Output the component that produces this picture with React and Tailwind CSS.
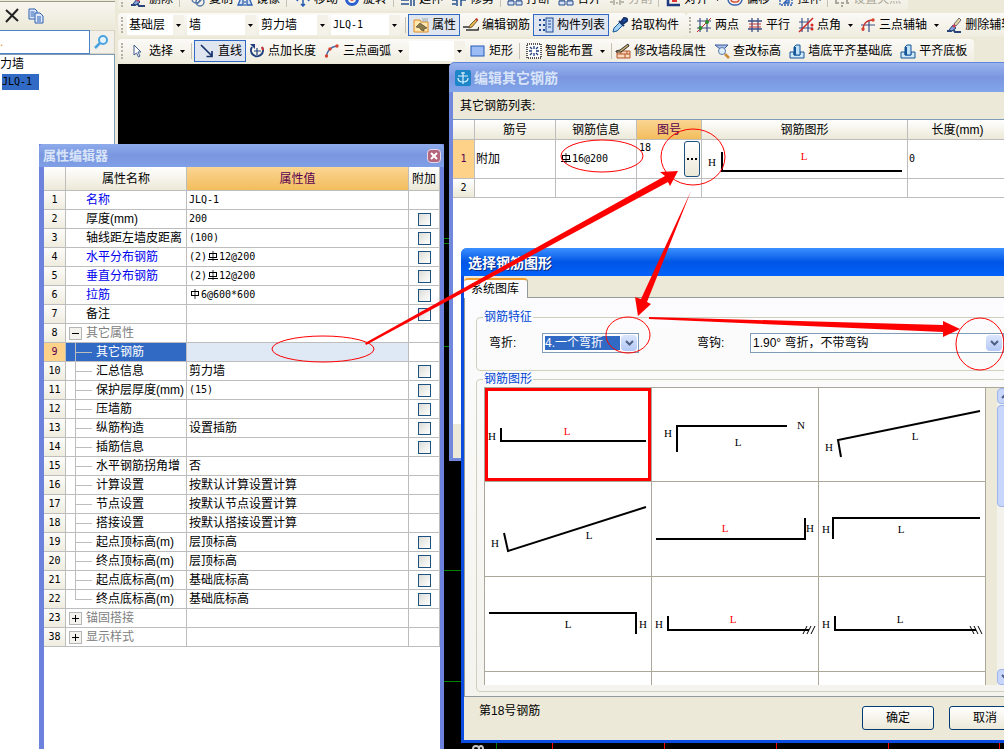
import { useState } from 'react'
import clsx from 'clsx'

const SANS = "font-['Liberation_Sans','Noto_Sans_CJK_SC',sans-serif]"
const MONO = "font-['DejaVu_Sans_Mono','Noto_Sans_CJK_SC',monospace] text-[10px]"

/* ---------- small icons, all on a 16x16 grid ---------- */

const icons = {
    brush: (
        <>
            <path d="M1 14h4l2-2 2 3h6" fill="none" stroke="#26437a" strokeWidth="2" />
            <path d="M3 13l4-5 3 3-4 3z" fill="#7fa0d8" stroke="#26437a" />
            <path d="M8 7l5-6 2 2-5 6z" fill="#ead9a8" stroke="#4a4a60" strokeWidth=".8" />
            <path d="M6 9l2-2 2 2-2 2z" fill="#c2405a" />
        </>
    ),
    copy: (
        <g fill="none" stroke="#5578a8" strokeWidth="1.4">
            <circle cx="6" cy="8" r="4" />
            <circle cx="10" cy="11" r="4" />
            <path d="M7 13l5-5" />
        </g>
    ),
    mirror: (
        <g fill="#cfe0f7" stroke="#2a5db0" strokeWidth="1.3">
            <path d="M6 2v12H1zM10 2v12h5z" />
            <path d="M8 1v14" strokeDasharray="2 1" />
        </g>
    ),
    move: <path d="M8 1v14M1 8h14M6 3l2-2 2 2M6 13l2 2 2-2M3 6L1 8l2 2M13 6l2 2-2 2" fill="none" stroke="#2a5db0" strokeWidth="1.5" />,
    rotate: (
        <>
            <circle cx="8" cy="8" r="5.5" fill="none" stroke="#2a5fd0" strokeWidth="3" />
            <circle cx="8" cy="8" r="2" fill="#e05040" />
        </>
    ),
    extend: <path d="M1 9h8M1 13h8M11 2v13M14 2v13M6 6l3 3" fill="none" stroke="#24508f" strokeWidth="1.5" />,
    trim: <path d="M1 9h5M10 9h5M6 2v13M10 2v13M1 13h4" fill="none" stroke="#24508f" strokeWidth="1.5" />,
    split: <path d="M1 5h6v4H1zM9 5h6v4H9zM1 10h6v4H1zM9 10h6v4H9z" fill="#d6e3f8" stroke="#2b4f8c" />,
    cut: <path d="M2 2h12v5H2zM5 7v7M11 7v7M1 11h3M12 11h3M7 12h2" fill="none" stroke="#a8a69a" strokeWidth="1.5" />,
    align: (
        <>
            <path d="M3 2v12h12" fill="none" stroke="#203a80" strokeWidth="2.5" />
            <path d="M7 6h7M7 10h5" stroke="#d33" strokeWidth="2" />
        </>
    ),
    offset: (
        <g fill="none" strokeWidth="1.5">
            <rect x="1" y="1" width="14" height="13" rx="6" stroke="#3b66b5" />
            <rect x="4" y="4" width="8" height="7" rx="3" stroke="#d8513b" />
        </g>
    ),
    stretch: (
        <g fill="none" stroke="#2a5db0" strokeWidth="1.3">
            <rect x="2" y="2" width="12" height="12" strokeDasharray="2 1" />
            <path d="M6 12l5-5v5z" fill="#8fb0e8" />
        </g>
    ),
    grip: <path d="M1 12h4M7 12h3M12 12h3M8 14v2M2 9v2M13 9v2" stroke="#aaa89c" strokeWidth="2" />,
    props: (
        <>
            <path d="M1 3h6l1 2h7v10H1z" fill="#ffe7b0" stroke="#e08a1e" />
            <path d="M3 10l4-4 7 5-3 1v2l-3-1-1-2z" fill="#8a7a4a" stroke="#4a4028" strokeWidth=".6" />
            <path d="M9 4h6M9 2h6" stroke="#9aa" />
        </>
    ),
    editBar: (
        <>
            <path d="M0 10h6M3 13h12l1-3" fill="none" stroke="#333" strokeWidth="1.5" />
            <path d="M6 11l1-3 6-6 2 1-6 7z" fill="#e6b84c" stroke="#5a4220" strokeWidth=".8" />
            <path d="M12 2l2-1 1 2-1 1z" fill="#c33" />
        </>
    ),
    list: (
        <>
            <path d="M1 3h2M1 8h2M1 13h2M5 3h2M5 8h2M5 13h2" stroke="#1e4b93" strokeWidth="2" />
            <rect x="8" y="1" width="7" height="14" fill="#c7dbf8" stroke="#1e4b93" />
            <path d="M10 4h3M10 7h3M10 10h3" stroke="#1e4b93" />
        </>
    ),
    picker: (
        <>
            <path d="M1 15l1-4 6-6 3 3-6 6z" fill="#9fd0f5" stroke="#1b5796" />
            <path d="M7 4l5 5M9 5l3-4q4 0 3 3l-4 3z" fill="#1d4ea8" stroke="#16336e" strokeWidth="2" />
        </>
    ),
    twoPoint: (
        <>
            <path d="M4 1v14M11 1v14M1 4h14M1 11h14" stroke="#3c4f86" strokeWidth="1.2" />
            <path d="M1 15L15 1" stroke="#c22" />
            <circle cx="4.500" cy="11" r="2" fill="#2d8a2d" />
            <circle cx="11" cy="5" r="2" fill="#2d8a2d" />
        </>
    ),
    parallel: (
        <>
            <path d="M5 1v14M11 1v14" stroke="#3c4f86" strokeWidth="1.3" />
            <path d="M1 4h14M1 12h14" stroke="#3c4f86" strokeWidth="1.3" />
            <path d="M2 7h12M2 10h12" stroke="#c33" />
        </>
    ),
    angle: (
        <>
            <path d="M4 1v14M1 11h14M10 1v14M1 5h9" stroke="#3c4f86" strokeWidth="1.2" />
            <path d="M1 15L15 1" stroke="#c22" strokeWidth="1.4" />
            <circle cx="14" cy="8" r="1.5" fill="#d22" />
            <circle cx="14" cy="12" r="1.500" fill="#d22" />
        </>
    ),
    arcAxis: (
        <>
            <path d="M9 3v12M1 8h14" stroke="#3c4f86" strokeWidth="1.2" />
            <path d="M3 14Q3 3 13 3" fill="none" stroke="#c33" strokeWidth="1.3" />
            <circle cx="13" cy="3" r="1.700" fill="#d8442f" />
            <circle cx="3" cy="12" r="1.700" fill="#d8442f" />
        </>
    ),
    cursor: <path d="M4 2v10l2.500-2 2 4 1.500-1-2-4h3z" fill="#fff" stroke="#3c5a8a" />,
    line: <path d="M2 2l11 11M13 8v5.500H7.500" fill="none" stroke="#16336e" strokeWidth="1.7" />,
    pointLen: (
        <>
            <path d="M3 4a6 6 0 1 0 10 0" fill="none" stroke="#1e3e7e" strokeWidth="2" />
            <path d="M1 1h5v5z" fill="#1e3e7e" />
            <path d="M8 5v7M5 8h7" stroke="#1e3e7e" strokeWidth="1.2" />
            <path d="M13 4l1 3" stroke="#d33" strokeWidth="2" />
        </>
    ),
    arc: (
        <>
            <path d="M2 14Q4 4 13 3" fill="none" stroke="#4b6aa8" strokeWidth="1.5" />
            <circle cx="2.500" cy="13" r="1.7" fill="#d8442f" />
            <circle cx="6" cy="6" r="1.7" fill="#d8442f" />
            <circle cx="13" cy="3" r="1.7" fill="#d8442f" />
        </>
    ),
    rect: <rect x="1" y="3" width="13" height="10" fill="#9dbcf5" stroke="#2458b8" />,
    smart: (
        <>
            <rect x="1" y="1" width="14" height="14" fill="#fff" stroke="#222" strokeWidth="1.500" strokeDasharray="1 1" />
            <path d="M8 3v3M8 10v3M3 8h3M10 8h3M4 4l2 2M12 4l-2 2M4 12l2-2M12 12l-2-2" stroke="#1e3e7e" strokeWidth="1.3" />
        </>
    ),
    wallEdit: (
        <>
            <path d="M2 8h13v7H2z" fill="#f8d8b8" stroke="#b5552c" />
            <path d="M2 11h13M6 8v3M10 11v4M12 8v3" stroke="#b5552c" />
            <path d="M1 8l4-1 8-6 1 2-8 6H1z" fill="#c9b070" stroke="#222" strokeWidth=".9" />
        </>
    ),
    query: (
        <>
            <path d="M1 2h13l-4 4v3H6V6z" fill="#a8bfe8" stroke="#3a5a9a" />
            <circle cx="8" cy="8" r="3.500" fill="#dfeefc" stroke="#5878a8" />
            <path d="M11 11l4 4" stroke="#c98a3a" strokeWidth="2.5" />
        </>
    ),
    wallBase: (
        <>
            <path d="M1 9h4v3h6V9h4v6H1z" fill="#cfe8f8" stroke="#15559a" />
            <path d="M5 4l2-2h4v10H5z" fill="#bfe2f7" stroke="#15559a" />
            <path d="M6 4v8" stroke="#15559a" strokeWidth="2" />
        </>
    ),
}

function Icon({ name }) {
    return <svg viewBox="0 0 16 16" className="size-4 shrink-0">{icons[name]}</svg>
}

function Caret() {
    return (
        <svg viewBox="0 0 5 3" className="h-[3px] w-[5px] shrink-0">
            <path d="M0 0h5L2.500 3z" fill="#000" />
        </svg>
    )
}

/* ---------- toolbar parts ---------- */

function Tool({ icon, label, active, menu, disabled }) {
    return (
        <button
            disabled={disabled}
            className={clsx(
                'flex h-[22px] shrink-0 items-center gap-[3px] whitespace-nowrap border',
                active ? 'border-[#316ac5] bg-[#e0e6f0] pl-1 pr-[3px]' : 'border-transparent',
                disabled && 'text-[#aca899]'
            )}
        >
            <Icon name={icon} />
            <span>{label}</span>
            {menu && <span className="ml-1 mr-[3px] flex"><Caret /></span>}
        </button>
    )
}

function Sep({ tight }) {
    return <span className={clsx('h-4 w-px shrink-0 bg-[#c5c2b4]', !tight && 'mx-[3px]')} />
}

function Gap() {
    return <span className="w-0.5 shrink-0" />
}

function Handle() {
    return <span className="mr-px h-4 w-[3px] shrink-0 border-l-2 border-dotted border-[#b5b2a5]" />
}

function Combo({ label, value, className }) {
    return (
        <div className={clsx('relative h-5 shrink-0 bg-white', className)}>
            <select aria-label={label} className="h-full w-full appearance-none pl-0.5 leading-5 outline-none">
                <option>{value}</option>
            </select>
            <span className="pointer-events-none absolute inset-y-0 right-0 flex w-[11px] items-center justify-center bg-[#f3f1e8]">
                <Caret />
            </span>
        </div>
    )
}

function Strip({ children, grow }) {
    return (
        <div className={clsx('flex h-6 shrink-0 items-center gap-0.5 rounded-sm bg-linear-to-b from-[#fbfaf7] to-[#efecdf] pl-[3px]', grow ? 'flex-1' : 'pr-1.5')}>
            {children}
        </div>
    )
}

function Toolbars() {
    return (
        <div className="flex h-16 flex-col overflow-hidden bg-[#ece9d8]">
            {/* top strip is half hidden under the window edge */}
            <div className="flex h-[11px] items-end overflow-hidden">
                <Strip>
                    <Handle />
                    <span />
                    <Tool icon="brush" label="删除" />
                    <Sep /><Gap />
                    <Tool icon="copy" label="复制" />
                    <Tool icon="mirror" label="镜像" />
                    <Sep /><span />
                    <Tool icon="move" label="移动" />
                    <span />
                    <Tool icon="rotate" label="旋转" />
                    <Sep />
                    <Tool icon="extend" label="延伸" />
                    <Gap />
                    <Tool icon="trim" label="修剪" />
                    <Sep />
                    <Tool icon="split" label="打断" />
                    <Gap />
                    <Tool icon="split" label="合并" />
                    <Gap />
                    <Tool icon="cut" label="分割" disabled />
                    <Sep />
                    <Tool icon="align" label="对齐" menu />
                    <Tool icon="offset" label="偏移" />
                    <Gap />
                    <Tool icon="stretch" label="拉伸" />
                    <Sep />
                    <Tool icon="grip" label="设置夹点" disabled />
                </Strip>
            </div>
            <div className="mt-0.5 flex overflow-hidden">
                <Strip>
                    <Handle />
                    <Combo label="楼层" value="基础层" className="w-[57px]" />
                    <Combo label="构件类型" value="墙" className="ml-px w-[69px]" />
                    <Combo label="构件" value="剪力墙" className="ml-px w-[69px]" />
                    <Combo label="名称" value="JLQ-1" className={clsx('ml-px w-[69px]', MONO)} />
                    <span className="w-px" />
                    <Sep tight />
                    <Tool icon="props" label="属性" active />
                    <Tool icon="editBar" label="编辑钢筋" />
                    <Tool icon="list" label="构件列表" active />
                    <Tool icon="picker" label="拾取构件" />
                </Strip>
                <Strip grow>
                    <Handle />
                    <Tool icon="twoPoint" label="两点" />
                    <Gap />
                    <Tool icon="parallel" label="平行" />
                    <Gap />
                    <Tool icon="angle" label="点角" menu />
                    <Tool icon="arcAxis" label="三点辅轴" menu />
                    <Tool icon="brush" label="删除辅轴" />
                </Strip>
            </div>
            <div className="mt-0.5 flex">
                <Strip>
                    <Handle />
                    <span />
                    <Tool icon="cursor" label="选择" menu />
                    <Sep tight />
                    <Tool icon="line" label="直线" active />
                    <Tool icon="pointLen" label="点加长度" />
                    <Gap />
                    <Tool icon="arc" label="三点画弧" menu />
                    <Combo label="弧类型" value="" className="w-[56px]" />
                    <span />
                    <Tool icon="rect" label="矩形" />
                    <Sep />
                    <Tool icon="smart" label="智能布置" menu />
                    <Sep tight />
                    <Tool icon="wallEdit" label="修改墙段属性" />
                    <Gap />
                    <Tool icon="query" label="查改标高" />
                    <Gap />
                    <Tool icon="wallBase" label="墙底平齐基础底" />
                    <Gap />
                    <Tool icon="wallBase" label="平齐底板" />
                </Strip>
            </div>
        </div>
    )
}

/* ---------- component list on the left ---------- */

function ComponentTree() {
    return (
        <aside className="flex w-[118px] shrink-0 flex-col border-r-[3px] border-[#ece9d8] bg-[#ece9d8]">
            <div className="mt-px flex h-[29px] items-center gap-2 border-t border-[#9d9a8c] bg-linear-to-b from-[#f7f5ef] to-[#ece9d8] pl-1">
                <button aria-label="删除">
                    <svg viewBox="0 0 16 16" className="size-4">
                        <path d="M2 2l12 11M14 1L2 14" stroke="#222" strokeWidth="2" />
                    </svg>
                </button>
                <button aria-label="复制">
                    <svg viewBox="0 0 16 16" className="size-4">
                        <path d="M1 1h6l2 2v8H1z" fill="#dfeaff" stroke="#2c5fae" />
                        <path d="M7 5h5l3 3v7H7z" fill="#dfeaff" stroke="#2c5fae" />
                        <path d="M2.500 4h4M2.500 6h4M2.500 8h4M9 9h4M9 11h4M9 13h4" stroke="#2c5fae" />
                    </svg>
                </button>
            </div>
            <div className="flex h-6">
                <input aria-label="搜索构件" defaultValue="." className="w-[90px] border border-l-0 border-[#4a82c4] bg-white text-[#e08a1e] outline-none" />
                <button aria-label="搜索" className="flex flex-1 items-center justify-center border border-l-0 border-[#d8d4c4] bg-[#f2f0e8]">
                    <svg viewBox="0 0 16 16" className="size-4">
                        <circle cx="9" cy="6" r="4" fill="#e4f4ff" stroke="#4aa3df" strokeWidth="2" />
                        <path d="M6 9l-5 5" stroke="#4aa3df" strokeWidth="2.500" />
                    </svg>
                </button>
            </div>
            <div className="flex-1 border-r border-t border-[#7f9db9] bg-white">
                <div className="h-[18px] leading-[18px]">力墙</div>
                <button className={clsx('ml-0.5 h-4 w-[37px] bg-[#316ac5] text-left text-black', MONO)}>JLQ-1</button>
            </div>
        </aside>
    )
}

/* ---------- property editor ---------- */

// Rebar grade sign: grade II carries a bar under the circle
function Grade({ second }) {
    return (
        <svg viewBox="0 0 12 12" className="inline-block size-3 align-[-2px]" fill="none" stroke="currentColor">
            <rect x="2.500" y="3.500" width="7" height="4" />
            <path d="M6 1v10" strokeWidth=".8" />
            {second && <path d="M1 9.500h10" />}
        </svg>
    )
}

const props = [
    { n: 1, name: '名称', value: 'JLQ-1', key: true },
    { n: 2, name: '厚度(mm)', value: '200', check: true },
    { n: 3, name: '轴线距左墙皮距离', value: '(100)', check: true },
    { n: 4, name: '水平分布钢筋', value: <>(2)<Grade second />12@200</>, key: true, check: true },
    { n: 5, name: '垂直分布钢筋', value: <>(2)<Grade second />12@200</>, key: true, check: true },
    { n: 6, name: '拉筋', value: <><Grade />6@600*600</>, key: true, check: true },
    { n: 7, name: '备注', check: true },
    { n: 8, name: '其它属性', group: '−' },
    { n: 9, name: '其它钢筋', child: true, selected: true },
    { n: 10, name: '汇总信息', value: '剪力墙', child: true, check: true },
    { n: 11, name: '保护层厚度(mm)', value: '(15)', child: true, check: true },
    { n: 12, name: '压墙筋', child: true, check: true },
    { n: 13, name: '纵筋构造', value: '设置插筋', child: true, check: true },
    { n: 14, name: '插筋信息', child: true, check: true },
    { n: 15, name: '水平钢筋拐角增', value: '否', child: true },
    { n: 16, name: '计算设置', value: '按默认计算设置计算', child: true },
    { n: 17, name: '节点设置', value: '按默认节点设置计算', child: true },
    { n: 18, name: '搭接设置', value: '按默认搭接设置计算', child: true },
    { n: 19, name: '起点顶标高(m)', value: '层顶标高', child: true, check: true },
    { n: 20, name: '终点顶标高(m)', value: '层顶标高', child: true, check: true },
    { n: 21, name: '起点底标高(m)', value: '基础底标高', child: true, check: true },
    { n: 22, name: '终点底标高(m)', value: '基础底标高', child: true, check: true, last: true },
    { n: 23, name: '锚固搭接', group: '+' },
    { n: 38, name: '显示样式', group: '+' },
]

const CELL = 'border-b border-r border-[#bdbdbd] p-0'
const HEAD = 'bg-linear-to-b from-white to-[#ece9d8] font-normal'
const HEAD_ON = 'bg-linear-to-b from-[#fbd592] to-[#f2bd5c] font-normal text-[#5a0050]'

function NameCell({ row }) {
    return (
        <div className={clsx('flex h-[18px] items-center overflow-hidden whitespace-nowrap', row.selected && 'bg-[#316ac5] text-white', row.key && 'text-[#0000ee]', row.group && 'text-[#808080]')}>
            {row.group && (
                <button aria-label={row.name} className="ml-[3px] mr-1 flex size-[13px] items-center justify-center border border-[#b5b5b5] bg-[#f4f3ee] text-black">
                    <svg viewBox="0 0 9 9" className="size-[9px]" stroke="#000">
                        <path d={row.group === '+' ? 'M1 4.500h7M4.500 1v7' : 'M1 4.500h7'} />
                    </svg>
                </button>
            )}
            {row.child && (
                <span className={clsx('ml-[9px] mr-1 flex w-[17px] shrink-0 border-l border-[#bdbdbd]', row.last ? 'h-[10px] items-end self-start' : 'h-full items-center')}>
                    <span className="h-px w-full bg-[#bdbdbd]" />
                </span>
            )}
            <span className={clsx(!row.group && !row.child && 'ml-5')}>{row.name}</span>
        </div>
    )
}

function PropertyEditor() {
    return (
        <section className="absolute -bottom-1 left-[39px] top-36 flex w-[405px] flex-col border-l-[5px] border-r-4 border-[#6c82dc] bg-white">
            <header className="-ml-[5px] -mr-1 flex h-[23px] shrink-0 items-center justify-between rounded-t bg-linear-to-b from-[#8eabec] via-[#7a96df] to-[#7f9fe6] pl-1 pr-[3px]">
                <h2 className="text-[13px] font-bold text-[#d8e4f8]">属性编辑器</h2>
                <button aria-label="关闭" className="flex size-[14px] items-center justify-center rounded-sm border border-[#e6d9ea] bg-[#b5667f]">
                    <svg viewBox="0 0 8 8" className="size-2"><path d="M1 1l6 6M7 1L1 7" stroke="#fff" strokeWidth="2" /></svg>
                </button>
            </header>
            <table className="w-full table-fixed border-separate border-spacing-0">
                <colgroup>
                    <col className="w-[22px]" />
                    <col className="w-[121px]" />
                    <col />
                    <col className="w-[31px]" />
                </colgroup>
                <thead>
                    <tr className="h-6">
                        <th className={clsx(CELL, HEAD)} />
                        <th className={clsx(CELL, HEAD)}>属性名称</th>
                        <th className={clsx(CELL, HEAD_ON)}>属性值</th>
                        <th className={clsx(CELL, HEAD)}>附加</th>
                    </tr>
                </thead>
                <tbody>
                    {props.map((row) => (
                        <tr key={row.n} className="h-[19px]">
                            <td className={clsx(CELL, MONO, 'text-center', row.selected ? 'bg-[#ffd28a] text-[#5a0050]' : 'bg-linear-to-b from-[#fdfcf9] to-[#efecdf]')}>{row.n}</td>
                            <td className={CELL}><NameCell row={row} /></td>
                            <td className={clsx(CELL, 'pl-0.5 leading-4', row.n < 12 && row.n !== 10 && MONO, row.selected && 'bg-[#dfe8f5]')}>
                                {row.value}
                            </td>
                            <td className={CELL}>
                                {row.check && (
                                    <input type="checkbox" aria-label={`${row.name} 附加`} className="mx-auto block size-[13px] appearance-none border border-[#1c5180] bg-linear-to-br from-[#dcdcd7] to-white" />
                                )}
                            </td>
                        </tr>
                    ))}
                </tbody>
            </table>
        </section>
    )
}

/* ---------- rebar editor window ---------- */

function Label({ x, y, red, children }) {
    return (
        <text x={x} y={y + 4} textAnchor="middle" fill={red ? '#f00' : '#000'} className="font-['Liberation_Serif',serif] text-[11px]">
            {children}
        </text>
    )
}

function Bar({ d }) {
    return <path d={d} fill="none" stroke="#000" strokeWidth="2" />
}

function RebarEditor() {
    return (
        <section className="absolute -right-4 left-[449px] top-[62px] flex h-[399px] flex-col rounded-t-md border-b-[3px] border-l-4 border-[#7288dc] bg-[#ece9d8]">
            <header className="-ml-1 flex h-[30px] shrink-0 items-center gap-[3px] rounded-t-md border-t border-[#5f86de] bg-linear-to-b from-[#9ab4ee] via-[#7a96df] to-[#82a6ea] pl-1.5">
                <svg viewBox="0 0 16 16" className="size-4">
                    <rect width="16" height="16" rx="2" fill="#1d86c8" />
                    <path d="M8 2v12M3 6h10M3 8q0 4 5 4t5-4M6 3h4" fill="none" stroke="#d8f2ff" strokeWidth="1.2" />
                </svg>
                <h2 className="text-[14px] font-bold text-[#d8e4f8]">编辑其它钢筋</h2>
            </header>
            <p className="h-[27px] pl-[7px] leading-[28px]">其它钢筋列表:</p>
            <div className="flex-1 border-t border-[#7f9db9] bg-white">
                <table className="w-full table-fixed border-separate border-spacing-0">
                    <colgroup>
                        <col className="w-[22px]" />
                        <col className="w-[81px]" />
                        <col className="w-[81px]" />
                        <col className="w-[65px]" />
                        <col className="w-[206px]" />
                        <col />
                    </colgroup>
                    <thead>
                        <tr className="h-5">
                            <th className={clsx(CELL, HEAD)} />
                            <th className={clsx(CELL, HEAD)}>筋号</th>
                            <th className={clsx(CELL, HEAD)}>钢筋信息</th>
                            <th className={clsx(CELL, HEAD_ON)}>图号</th>
                            <th className={clsx(CELL, HEAD)}>钢筋图形</th>
                            <th className={clsx(CELL, HEAD, 'pr-3')}>长度(mm)</th>
                        </tr>
                    </thead>
                    <tbody>
                        <tr className="h-[39px]">
                            <td className={clsx(CELL, MONO, 'bg-[#ffd28a] text-center text-[#5a0050]')}>1</td>
                            <td className={clsx(CELL, 'pl-px')}>附加</td>
                            <td className={clsx(CELL, MONO, 'pl-1')}><Grade second />16@200</td>
                            <td className={CELL}>
                                <div className={clsx('flex h-[38px] items-center justify-between pl-0.5', MONO)}>
                                    <span className="self-start">18</span>
                                    <button aria-label="选择图形" className="mr-px flex h-9 w-4 items-center justify-center rounded-[3px] border border-[#1c5180] bg-linear-to-b from-white to-[#ece9d8]">
                                        <svg viewBox="0 0 10 2" className="h-0.5 w-2.5"><path d="M0 0h2v2H0zM4 0h2v2H4zM8 0h2v2H8z" /></svg>
                                    </button>
                                </div>
                            </td>
                            <td className={CELL}>
                                <svg viewBox="0 0 205 38" className="block h-[38px] w-[205px]">
                                    <Label x={10} y={22}>H</Label>
                                    <Bar d="M20 12v19h180" />
                                    <Label x={102} y={16} red>L</Label>
                                </svg>
                            </td>
                            <td className={clsx(CELL, MONO, 'pl-px')}>0</td>
                        </tr>
                        <tr className="h-[19px]">
                            <td className={clsx(CELL, HEAD, MONO, 'text-center')}>2</td>
                            <td className={CELL} />
                            <td className={CELL} />
                            <td className={CELL} />
                            <td className={CELL} />
                            <td className={CELL} />
                        </tr>
                    </tbody>
                </table>
            </div>
            <div className="h-[34px] shrink-0" />
        </section>
    )
}

/* ---------- shape picker dialog ---------- */

const shapes = [
    { d: 'M16 40v13h145', h: [7, 48], l: [82, 43], red: true },
    { d: 'M25 64V38h110', h: [16, 45], l: [86, 54], n: [149, 37] },
    { d: 'M22 69L19 52L161 23', h: [10, 59], l: [96, 48] },
    { d: 'M19 51L23 69L161 25', h: [10, 61], l: [104, 53] },
    { d: 'M4 57h149V36', h: [158, 46], l: [73, 46], red: true },
    { d: 'M14 57V36h147', h: [7, 47], l: [82, 47] },
    { d: 'M4 36h147v21', h: [158, 47], l: [83, 47] },
    { d: 'M16 39v14h141', h: [7, 47], l: [81, 42], red: true, hatch: 'M151 57l4-8M155 57l4-8M159 57l4-8' },
    { d: 'M16 39v14h141', h: [7, 47], l: [81, 42], hatch: 'M151 49l4 8M155 49l4 8M159 49l4 8' },
]

function XpSelect({ id, value, className, focused }) {
    return (
        <div className={clsx('relative h-5 border border-[#7f9db9] bg-white p-0.5', className)}>
            <select
                id={id}
                className={clsx('block h-[14px] appearance-none leading-[14px] outline-none', focused ? 'w-[75px] bg-[#316ac5] text-white outline-1 outline-dotted outline-[#e0a030]' : 'w-full')}
            >
                <option>{value}</option>
            </select>
            <span className="pointer-events-none absolute inset-y-px right-px flex w-4 items-center justify-center rounded-sm bg-linear-to-b from-[#dbe6fd] to-[#b4c8f5]">
                <svg viewBox="0 0 9 6" className="h-1.5 w-[9px]"><path d="M1 1l3.500 3.500L8 1" fill="none" stroke="#4d6185" strokeWidth="2" /></svg>
            </span>
        </div>
    )
}

function ScrollButton({ d, label }) {
    return (
        <button aria-label={label} className="flex h-4 items-center justify-center rounded-sm border border-[#9db5ea] bg-[#c8d6fb]">
            <svg viewBox="0 0 9 6" className="h-1.5 w-[9px]"><path d={d} fill="none" stroke="#4d6185" strokeWidth="2" /></svg>
        </button>
    )
}

function ShapeDialog() {
    const [picked, setPicked] = useState(0)

    return (
        <section className="absolute -right-8 left-[461px] top-[248px] flex h-[495px] flex-col rounded-t-md border-b-[3px] border-l-[3px] border-[#0a4be0] bg-[#ece9d8]">
            <header className="-ml-[3px] flex h-7 shrink-0 items-center rounded-t-md bg-linear-to-b from-[#3a90ff] via-[#0055e5] to-[#0062fa] pl-[7px] pt-0.5">
                <h2 className="text-[14px] font-bold text-white [text-shadow:1px_1px_#0a2a80]">选择钢筋图形</h2>
            </header>
            <div role="tablist" className="flex h-[21px] shrink-0 items-end pt-px">
                <button role="tab" aria-selected="true" className="z-10 -mb-px h-5 rounded-t-sm border-r border-t-2 border-r-[#919b9c] border-t-[#f0a030] bg-[#fcfcfe] pl-[7px] pr-2 leading-[17px]">
                    系统图库
                </button>
            </div>
            <div role="tabpanel" className="flex min-h-0 flex-1 flex-col border-y border-l border-[#919b9c] bg-linear-to-b from-[#fcfcfe] to-[#f4f3ee] pl-[11px] pr-3">
                <fieldset className="mt-[11px] flex h-[62px] shrink-0 items-start rounded border border-[#d0d0bf] pl-3">
                    <legend className="-ml-1.5 px-px leading-4 text-[#0046d5]">钢筋特征</legend>
                    <div className="flex items-center pt-2">
                        <label htmlFor="bend" className="w-[53px]">弯折:</label>
                        <XpSelect id="bend" value="4.一个弯折" className="w-[97px]" focused />
                        <label htmlFor="hook" className="ml-[58px] w-[53px]">弯钩:</label>
                        <XpSelect id="hook" value="1.90° 弯折，不带弯钩" className="w-[254px]" />
                    </div>
                </fieldset>
                <fieldset className="mb-1 flex min-h-0 flex-1 rounded border border-[#d0d0bf] pb-[7px] pl-[7px] pr-1">
                    <legend className="-ml-px px-px leading-4 text-[#0046d5]">钢筋图形</legend>
                    <div className="flex h-[298px] border-t border-[#aca899]">
                        <div className="grid shrink-0 grid-cols-[repeat(3,167px)] grid-rows-[94px_95px_95px_13px] overflow-hidden border-l border-[#aca899] bg-white">
                            {shapes.map((s, i) => (
                                <button
                                    key={s.d + i}
                                    aria-label={`图形 ${i + 1}`}
                                    aria-pressed={picked === i}
                                    onClick={() => setPicked(i)}
                                    className="relative border-b border-r border-[#aca899]"
                                >
                                    <svg viewBox="0 0 166 94" className="block h-[94px] w-[166px]">
                                        <Bar d={s.d} />
                                        {s.hatch && <path d={s.hatch} stroke="#000" />}
                                        <Label x={s.h[0]} y={s.h[1]}>H</Label>
                                        <Label x={s.l[0]} y={s.l[1]} red={s.red}>L</Label>
                                        {s.n && <Label x={s.n[0]} y={s.n[1]}>N</Label>}
                                    </svg>
                                    {picked === i && <span className="absolute inset-0 border-[3px] border-[#f00]" />}
                                </button>
                            ))}
                            <span className="border-r border-[#aca899]" />
                            <span className="border-r border-[#aca899]" />
                            <span className="border-r border-[#aca899]" />
                        </div>
                        <div className="w-[11px] shrink-0 bg-[#ece9d8]" />
                        <div className="flex w-4 shrink-0 flex-col bg-[#f3f2ec]">
                            <ScrollButton label="向上" d="M1 5l3.500-3.500L8 5" />
                            <div className="mt-px h-[102px] rounded-sm border border-[#9db5ea] bg-[#c8d6fb]" />
                            <div className="flex-1" />
                            <ScrollButton label="向下" d="M1 1l3.500 3.500L8 1" />
                        </div>
                    </div>
                </fieldset>
            </div>
            <footer className="flex h-[43px] shrink-0 items-start justify-between pl-[15px] pr-[15px]">
                <span className="pt-1.5">第18号钢筋</span>
                <div className="flex gap-[15px] pt-[9px]">
                    <button className="h-6 w-[72px] rounded-[3px] border border-[#003c74] bg-linear-to-b from-white to-[#ece9d8]">确定</button>
                    <button className="h-6 w-[72px] rounded-[3px] border border-[#003c74] bg-linear-to-b from-white to-[#ece9d8]">取消</button>
                </div>
            </footer>
        </section>
    )
}

/* ---------- drawing area and red markup ---------- */

function CanvasMarks() {
    return (
        <svg className="absolute inset-0 size-full" fill="none" shapeRendering="crispEdges">
            <path d="M444 238h5M444 243h5M444 346h5M444 570h17M444 681h17M496 742v7" stroke="#008000" />
            <path d="M552 742v7M664 742v7M776 742v7M888 742v7M999 742v7" stroke="#f00" />
            <path d="M473 749q0-3 3-3t3 3q0-3 2-3t2 3" stroke="#c8c8c8" strokeWidth="2" shapeRendering="auto" />
        </svg>
    )
}

function Markup() {
    return (
        <svg className="pointer-events-none absolute inset-0 z-20 size-full">
            <g fill="none" stroke="#f00">
                <ellipse cx="323" cy="349" rx="51" ry="13" />
                <ellipse cx="602" cy="156" rx="41" ry="16" />
                <ellipse cx="693" cy="157" rx="32" ry="28" />
                <ellipse cx="628" cy="335" rx="22" ry="18" />
                <ellipse cx="980" cy="344" rx="24" ry="26" />
            </g>
            <g fill="#f00">
                <path d="M365 343L665 176L660 172L678 171L670 186L668 182L366 345z" />
                <path d="M691 191L641 299L635 297L638 316L651 304L647 302z" />
                <path d="M649 317L943 325V321L960 329L943 337V332L649 319z" />
            </g>
        </svg>
    )
}

export default function App() {
    return (
        <div className={clsx('relative flex h-screen w-full overflow-hidden bg-black text-[12px] leading-4 text-black', SANS)}>
            <CanvasMarks />
            <ComponentTree />
            <main className="min-w-0 flex-1">
                <Toolbars />
            </main>
            <RebarEditor />
            <PropertyEditor />
            <ShapeDialog />
            <Markup />
        </div>
    )
}
